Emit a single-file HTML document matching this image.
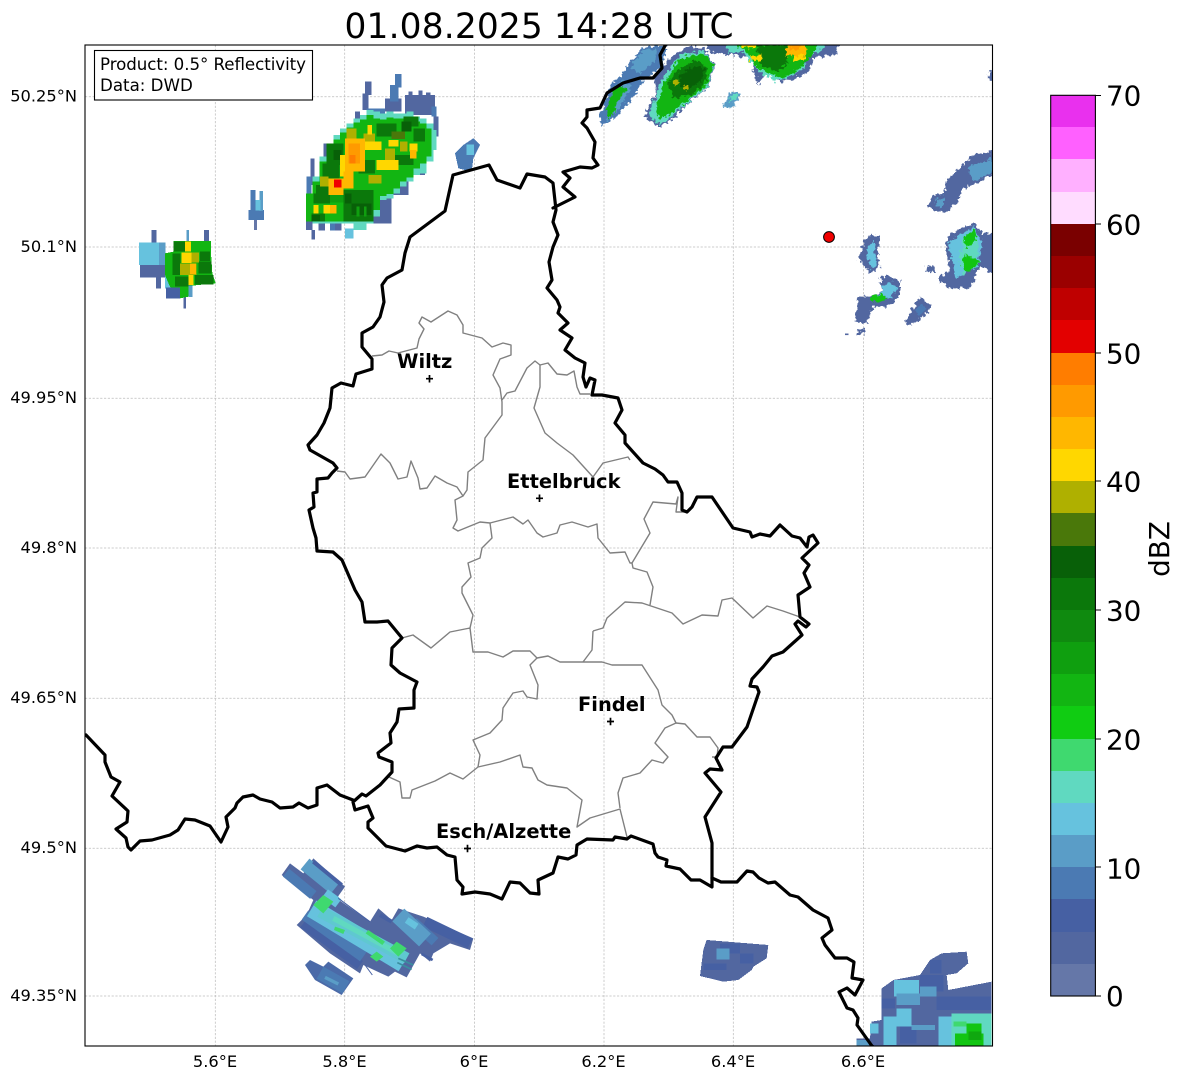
<!DOCTYPE html>
<html><head><meta charset="utf-8"><style>
html,body{margin:0;padding:0;background:#fff;width:1184px;height:1081px;overflow:hidden}
svg{display:block}
text{font-family:"DejaVu Sans",sans-serif;fill:#000}
.t{font-size:16.67px}
.l{font-size:16.25px}
.c{font-size:27.78px}
.b{font-size:19.44px;font-weight:bold}
</style></head><body>
<svg width="1184" height="1081" viewBox="0 0 1184 1081" xmlns="http://www.w3.org/2000/svg">
<defs>
<clipPath id="ax"><rect x="85" y="45" width="907.5" height="1001"/></clipPath>
<filter id="rough" x="-5%" y="-5%" width="110%" height="110%" filterUnits="objectBoundingBox" primitiveUnits="userSpaceOnUse" color-interpolation-filters="sRGB">
<feTurbulence type="fractalNoise" baseFrequency=".09" numOctaves="2" seed="4"/>
<feDisplacementMap in="SourceGraphic" scale="24" xChannelSelector="R" yChannelSelector="G"/>
</filter>
</defs>
<text x="539" y="38" font-size="34.4" text-anchor="middle" textLength="389">01.08.2025 14:28 UTC</text>

<g stroke="#bcbcbc" stroke-width=".75" stroke-dasharray="2.2 1.6" fill="none">
<path d="M215.3 45V1046M344.7 45V1046M474.5 45V1046M604 45V1046M733.3 45V1046M863.5 45V1046"/>
<path d="M85 96.7H992M85 247H992M85 398.3H992M85 548H992M85 698.3H992M85 848.3H992M85 996H992"/>
</g>

<g clip-path="url(#ax)">
<!-- main NW cell -->
<g transform="translate(290,60) scale(.33333)" shape-rendering="crispEdges">
<g fill="#5267a0">
<rect x="48" y="425" width="20" height="85"/><rect x="62" y="295" width="12" height="80"/><rect x="65" y="510" width="10" height="28"/><rect x="85" y="490" width="20" height="22"/><rect x="100" y="250" width="15" height="40"/><rect x="130" y="225" width="15" height="30"/>
<rect x="195" y="155" width="15" height="30"/><rect x="225" y="65" width="20" height="40"/><rect x="218" y="100" width="18" height="50"/>
<rect x="285" y="115" width="50" height="40"/><rect x="345" y="105" width="90" height="60"/><rect x="355" y="95" width="12" height="15"/><rect x="385" y="92" width="12" height="15"/><rect x="408" y="98" width="14" height="15"/><rect x="430" y="170" width="15" height="60"/>
<rect x="120" y="490" width="35" height="22"/><rect x="265" y="410" width="40" height="80"/><rect x="250" y="470" width="20" height="20"/><rect x="300" y="365" width="55" height="40"/><rect x="345" y="340" width="25" height="25"/><rect x="385" y="320" width="20" height="25"/>
</g>
<g fill="#4b7ab3"><rect x="300" y="75" width="25" height="50"/><rect x="315" y="42" width="20" height="40"/><rect x="230" y="145" width="55" height="20"/><rect x="425" y="140" width="15" height="30"/><rect x="50" y="350" width="15" height="75"/><rect x="120" y="490" width="15" height="22"/></g>
<g fill="#60d9c0">
<rect x="68" y="350" width="20" height="140"/><rect x="88" y="290" width="22" height="200"/><rect x="110" y="250" width="20" height="240"/><rect x="130" y="225" width="20" height="265"/><rect x="150" y="205" width="20" height="285"/><rect x="170" y="190" width="20" height="300"/><rect x="190" y="175" width="20" height="335"/><rect x="210" y="165" width="20" height="345"/><rect x="230" y="150" width="20" height="340"/><rect x="250" y="155" width="20" height="315"/><rect x="270" y="160" width="20" height="260"/><rect x="290" y="155" width="20" height="260"/><rect x="310" y="160" width="20" height="240"/><rect x="330" y="160" width="20" height="220"/><rect x="350" y="155" width="20" height="210"/><rect x="370" y="170" width="20" height="175"/><rect x="390" y="175" width="20" height="165"/><rect x="410" y="190" width="20" height="115"/><rect x="425" y="210" width="15" height="60"/>
</g>
<rect x="165" y="505" width="25" height="30" fill="#66c2de"/>
<g fill="#12b512">
<rect x="48" y="400" width="20" height="85"/><rect x="68" y="365" width="20" height="120"/><rect x="88" y="305" width="22" height="180"/><rect x="110" y="262" width="20" height="223"/><rect x="130" y="238" width="20" height="247"/><rect x="150" y="218" width="20" height="267"/><rect x="170" y="203" width="20" height="282"/><rect x="190" y="188" width="20" height="297"/><rect x="210" y="178" width="20" height="307"/><rect x="230" y="165" width="20" height="300"/><rect x="250" y="175" width="20" height="275"/><rect x="270" y="178" width="20" height="230"/><rect x="290" y="172" width="20" height="230"/><rect x="310" y="175" width="20" height="210"/><rect x="330" y="175" width="20" height="190"/><rect x="350" y="172" width="20" height="180"/><rect x="370" y="185" width="20" height="140"/><rect x="390" y="190" width="20" height="120"/><rect x="410" y="205" width="15" height="85"/>
</g>
<g fill="#0b780b"><rect x="160" y="390" width="90" height="95"/><rect x="65" y="460" width="40" height="25"/><rect x="78" y="375" width="40" height="30"/><rect x="110" y="250" width="50" height="65"/><rect x="98" y="310" width="50" height="45"/><rect x="260" y="190" width="60" height="40"/><rect x="340" y="170" width="45" height="30"/><rect x="205" y="300" width="50" height="40"/><rect x="310" y="285" width="60" height="30"/><rect x="370" y="205" width="35" height="40"/><rect x="70" y="400" width="50" height="30"/></g>
<g fill="#086008"><rect x="185" y="430" width="60" height="35"/><rect x="65" y="465" width="25" height="18"/><rect x="130" y="270" width="25" height="30"/><rect x="335" y="185" width="30" height="30"/><rect x="165" y="400" width="20" height="30"/></g>
<g fill="#0f9f0f"><rect x="200" y="440" width="8" height="30"/><rect x="222" y="440" width="8" height="30"/><rect x="120" y="400" width="40" height="28"/></g>
<g fill="#afb000"><rect x="170" y="205" width="30" height="30"/><rect x="220" y="220" width="35" height="25"/><rect x="235" y="345" width="40" height="25"/><rect x="285" y="265" width="30" height="40"/><rect x="90" y="350" width="25" height="30"/><rect x="330" y="245" width="22" height="30"/></g>
<rect fill="#4a780a" x="305" y="215" width="40" height="22"/>
<g fill="#ffd700"><rect x="150" y="285" width="20" height="65"/><rect x="225" y="245" width="50" height="25"/><rect x="260" y="300" width="65" height="30"/><rect x="295" y="240" width="30" height="20"/><rect x="70" y="435" width="15" height="25"/><rect x="100" y="435" width="20" height="25"/><rect x="358" y="250" width="25" height="25"/><rect x="232" y="195" width="14" height="28"/></g>
<g fill="#ffb700"><rect x="165" y="235" width="60" height="100"/><rect x="115" y="355" width="45" height="50"/><rect x="160" y="335" width="30" height="50"/><rect x="360" y="270" width="20" height="25"/><rect x="120" y="435" width="20" height="25"/></g>
<rect fill="#ff9a00" x="175" y="250" width="35" height="60"/>
<rect fill="#ff7d00" x="178" y="285" width="18" height="25"/>
<rect fill="#f00000" x="132" y="359" width="22" height="24"/>
</g>

<!-- west cells -->
<g transform="translate(85,45) scale(.33333)" shape-rendering="crispEdges">
<g fill="#5267a0"><rect x="165" y="660" width="75" height="38"/><rect x="200" y="555" width="15" height="40"/><rect x="213" y="695" width="15" height="35"/><rect x="357" y="555" width="15" height="35"/><rect x="295" y="755" width="8" height="35"/></g>
<rect fill="#5a9dc7" x="305" y="555" width="7" height="35"/>
<rect fill="#66c2de" x="162" y="592" width="65" height="68"/>
<rect fill="#5a9dc7" x="222" y="592" width="20" height="68"/>
<rect fill="#66c2de" x="240" y="690" width="20" height="40"/>
<path fill="#12b512" d="M240 625L265 620 265 588 378 588 378 625 382 685 392 715 320 722 310 755 285 760 255 725 240 690z"/>
<rect fill="#4660a3" x="243" y="728" width="42" height="33"/>
<rect fill="#5a9dc7" x="310" y="722" width="12" height="34"/>
<g fill="#0b780b"><rect x="265" y="590" width="35" height="30"/><rect x="262" y="625" width="25" height="65"/><rect x="340" y="650" width="40" height="35"/><rect x="330" y="690" width="55" height="28"/><rect x="270" y="695" width="40" height="30"/><rect x="345" y="620" width="30" height="28"/></g>
<g fill="#afb000"><rect x="285" y="655" width="50" height="35"/><rect x="320" y="622" width="22" height="30"/></g>
<g fill="#ffd700"><rect x="300" y="590" width="18" height="30"/><rect x="290" y="622" width="30" height="32"/><rect x="310" y="690" width="15" height="30"/></g>
<rect fill="#ffb700" x="315" y="655" width="18" height="32"/>
<g fill="#4b7ab3"><rect x="497" y="435" width="15" height="60"/><rect x="490" y="495" width="47" height="30"/></g>
<rect fill="#5a9dc7" x="524" y="438" width="10" height="60"/>
<rect fill="#66c2de" x="512" y="465" width="15" height="32"/>
<rect fill="#6577a8" x="507" y="525" width="9" height="30"/>
<path fill="#4b7ab3" d="M1110 325L1135 300 1165 280 1185 300 1165 340 1160 380 1120 370z"/>
<rect fill="#66c2de" x="1145" y="298" width="22" height="32"/>
</g>

<!-- NE cells -->
<g transform="translate(580,45) scale(.33333)" filter="url(#rough)">
<path fill="#4b7ab3" d="M65 245L62 205 90 120 130 85 150 50 190 5 260 0 250 60 190 110 150 170 110 215z"/>
<path fill="#5a9dc7" d="M80 230L85 180 100 125 130 105 155 125 130 170 100 210zM150 65L190 15 230 15 225 50 180 85z"/>
<path fill="#12b512" d="M85 222L80 190 100 135 125 120 140 130 110 175 100 210z"/>
<path fill="#5267a0" d="M190 215L230 140 220 95 270 40 320 5 370 10 405 60 385 125 340 160 285 215 240 248z"/>
<path fill="#60d9c0" d="M205 210L235 135 245 100 300 30 370 18 402 60 382 125 337 160 278 212 240 240z"/>
<path fill="#12b512" d="M225 200L250 115 300 40 370 25 400 60 380 120 330 160 275 205 240 222z"/>
<path fill="#0b780b" d="M262 115L300 70 345 45 385 70 375 115 335 150 280 160z"/>
<path fill="#086008" d="M300 90L345 60 375 75 365 105 330 130 300 125z"/>
<path fill="#afb000" d="M280 105h18v14h-18zM310 120h16v14h-16z"/>
<path fill="#5267a0" d="M380 -10H780L770 25 700 40 685 80 640 105 600 110 555 90 535 118 525 95 515 40 450 28 420 30 385 20z"/>
<path fill="#60d9c0" d="M440 -10H740L720 18 690 30 670 70 620 100 590 108 545 85 510 50 490 22 445 22z"/>
<path fill="#12b512" d="M455 -10H720L690 40 660 70 610 100 570 85 525 65 510 35 490 15z"/>
<path fill="#0b780b" d="M530 2H620V60L590 80 540 60z"/>
<path fill="#ffd700" d="M510 32h35v14h-35zM480 -10h45v18h-45zM640 30h35v18h-35z"/>
<path fill="#ffb700" d="M620 -10h60v42h-60z"/>
<path fill="#ff9a00" d="M630 -5h30v22h-30z"/>
<path fill="#5a9dc7" d="M430 185L445 145 475 140 478 165 450 190z"/>
<path fill="#60d9c0" d="M450 155l20-8v15l-20 8z"/>
<path fill="#5267a0" d="M1225 80L1245 70 1245 115 1225 100z"/>
<path fill="#5267a0" d="M1045 485L1060 450 1095 445 1100 405 1160 350 1180 330 1250 318 1250 380 1200 410 1150 430 1130 475 1095 505 1065 495z"/>
<path fill="#5a9dc7" d="M1165 365L1235 340 1245 375 1180 410 1170 390zM1065 465l30-8v25l-25 5z"/>
<path fill="#5267a0" d="M835 640L855 585 875 568 900 572 895 620 898 670 870 685z"/>
<path fill="#66c2de" d="M860 615L880 590 890 660 870 670z"/>
<path fill="#5267a0" d="M825 830L835 755 870 755 905 740 900 700 925 690 960 710 960 750 925 785 880 785 860 835z"/>
<path fill="#66c2de" d="M905 725l25-15 25 20-20 25-25 10-35 0 5-15 25-5z"/>
<path fill="#12c512" d="M875 748h40v22h-40z"/>
<path fill="#5267a0" d="M975 830L1020 755 1055 780 1035 815 990 840zM1040 665l20 0 5 15-25 0zM828 870l5-20 8 5 14-8 0 22-12-5-5 8z"/>
<path fill="#4b7ab3" d="M1005 800l20-25 15 10-20 25z"/>
<path fill="#5267a0" d="M1072 700L1110 675 1095 600 1110 565 1180 535 1210 565 1250 565 1250 690 1200 665 1170 730 1100 728z"/>
<path fill="#66c2de" d="M1105 590L1180 545 1205 590 1195 665 1130 700 1115 640z"/>
<path fill="#60d9c0" d="M1150 580L1185 560 1195 600 1190 660 1150 690 1140 640z"/>
<path fill="#12c512" d="M1150 575L1185 555 1188 590 1160 610zM1155 630L1190 640 1195 655 1165 685 1145 670z"/>
</g>
<rect x="845" y="333.5" width="3.5" height="1.6" fill="#5267a0"/>

<!-- south cells -->
<g transform="translate(270,850) scale(.33333)" fill="none" stroke-linecap="butt">
<path fill="#5267a0" d="M35 75L60 40 100 70 130 25 225 110 200 145 300 215 325 175 365 210 385 175 460 200 610 265 600 300 540 280 490 310 480 335 450 310 410 382 375 365 355 380 280 345 270 370 180 310 80 225 110 195 130 150z"/>
<g stroke="#4660a3"><path stroke-width="12" d="M330 195L365 215"/><path stroke-width="32" d="M465 215L600 280"/><path stroke-width="30" d="M100 220L270 345"/><path stroke-width="8" d="M455 312L488 330"/></g>
<g stroke="#4b7ab3"><path stroke-width="30" d="M48 68L130 135"/><path stroke-width="34" d="M105 195L280 320"/><path stroke-width="30" d="M430 215L495 275"/></g>
<g stroke="#5a9dc7"><path stroke-width="42" d="M105 42L195 115"/><path stroke-width="52" d="M385 195L465 270"/><path stroke-width="25" d="M170 130L200 152"/></g>
<path stroke="#4660a3" stroke-width="12" d="M130 35L215 105"/>
<g stroke="#66c2de"><path stroke-width="55" d="M125 175L400 340"/><path stroke-width="30" d="M165 130L205 160"/><path stroke-width="20" d="M410 210L440 230"/></g>
<path stroke="#5fc8d0" stroke-width="35" d="M150 185L410 325"/>
<path stroke="#60d9c0" stroke-width="16" d="M190 205L385 310"/>
<g fill="#3fd96f" stroke="none"><path d="M130 165L160 135 190 155 160 190zM360 295L380 275 410 295 385 320zM300 320L320 305 340 320 320 335zM195 230l30 10-5 12-28-12zM295 240l50 35-8 10-50-35z"/></g>
<g stroke="#3a8f9f" stroke-width="5"><path d="M385 325L430 345M382 338L425 358"/></g>
<path stroke="#4660a3" stroke-width="3" d="M285 345L307 375M205 145L300 215"/>
<path fill="#4b6aa8" d="M105 345L120 330 160 350 175 335 250 385 215 435 135 390z"/>
<path stroke="#4b7ab3" stroke-width="42" d="M150 368L228 412"/>
<path stroke="#5a9dc7" stroke-width="10" d="M165 382L205 402"/>
</g>
<g transform="translate(690,930) scale(.33333)" shape-rendering="crispEdges">
<path fill="#5267a0" d="M50 30L235 45 230 85 190 110 185 120 145 150 100 155 30 138 40 60z"/>
<path fill="#4660a3" d="M90 40h60v30h-60zM40 100h70v20h-70zM150 70h40v30h-40z"/>
<path fill="#5a9dc7" d="M80 55h38v33h-38z"/>
<path fill="#5267a0" d="M500 325H540L545 275 575 270 575 175 610 150 690 135 720 90 755 70 830 65 835 100 800 130 770 135 775 180 905 155 905 350H500z"/>
<path fill="#4660a3" d="M690 135h70v50h-70zM575 205h40v30h-40zM720 90h35v40h-35zM740 200h165v40h-165zM630 290h50v50h-50z"/>
<path fill="#66c2de" d="M612 150h75v50h-75zM620 235h45v55h-45zM580 260h40v85h-40zM540 280h25v30h-25zM745 260h160v90h-160z"/>
<path fill="#5a9dc7" d="M620 190h70v35h-70zM690 170h50v30h-50zM665 285h70v15h-70zM500 330h40v20h-40z"/>
<path fill="#60d9c0" d="M785 250h120v100h-120z"/>
<path fill="#3fd96f" d="M790 275h40v15h-40z"/>
<path fill="#12c512" d="M795 310h85v40h-85zM830 280h45v35h-45z"/>
<path fill="#0fa80f" d="M835 305h40v25h-40z"/>
</g>

<!-- canton lines -->
<g fill="none" stroke="#808080" stroke-width="1.4" stroke-linejoin="round">
<path d="M372 356L382 355 389 351 398 353 417 348 419 339 424 329 419 323 422 317 431 322 448 311 457 315 463 325 463 333 482 338 492 347 503 343 511 345 511 355 500 359 493 375 500 388 502 402 502 415 485 438 483 460 468 472 467 490 463 496"/>
<path d="M502 400L507 393 515 391 527 368 535 361 540 365 548 363 557 374 567 375 574 371 577 387 580 394 590 394"/>
<path d="M540 365L540 387 534 408 545 433 557 443 573 455 593 477 603 463 628 457 630 460"/>
<path d="M337 471L345 472 350 479 365 477 381 454 390 463 398 479 407 477 411 461 418 478 420 489 427 488 435 476 447 483 457 487 463 496 455 500 457 520 453 528 458 531 480 522 490 523 513 517 523 524 528 520 537 533 543 537 557 533 560 525 572 522 588 527 597 524 598 538 610 553 625 552 630 563 632 563 650 533 644 519 653 502 676 504 678 497 676 512 685 512"/>
<path d="M632 563L633 568 647 572 653 587 650 605"/>
<path d="M593 631L603 628 607 618 625 602 642 603 660 609 672 613 683 624 702 615 718 616 722 600 732 598 753 618 767 606 783 611 800 617"/>
<path d="M490 523L492 538 482 548 480 558 468 563 471 577 462 587 462 593 473 615 470 628"/>
<path d="M402 638L413 635 431 648 450 632 470 628 473 652 488 652 503 657 513 651 530 651 537 658 548 656 560 662 583 662 602 662 612 665 642 665 658 690 662 705 672 715 676 723"/>
<path d="M583 662L592 650 593 631"/>
<path d="M537 658L530 665 538 685 537 699 527 697 523 691 513 693 503 708 502 720 490 733 473 740 480 755 478 767"/>
<path d="M389 777L400 782 402 798 410 798 412 790 435 781 450 773 463 779 478 767 500 762 520 755 523 767 532 768 538 780 547 785 567 788 582 800 577 827 590 818 620 809 627 837"/>
<path d="M620 808L618 793 623 778 640 773 652 760 663 763 668 757 655 743 665 728 676 723 685 724 697 737 710 737 718 748 717 757 712 757"/>
</g>

<!-- borders -->
<g fill="none" stroke="#000" stroke-width="3.2" stroke-linejoin="round" stroke-linecap="round">
<path d="M489 165L453 175 445 211 410 237 405 253 402 270 387 278 382 285 384 302 380 317 373 327 362 333 362 347 372 359 372 369 356 374 353 386 341 383 332 388 330 408 324 423 317 435 308 445 310 450 333 463 337 468 332 473 328 478 317 479 317 492 313 493 314 507 309 510 313 528 316 538 317 551 333 552 342 560 355 590 362 602 365 622 377 622 388 621 402 638 392 648 391 665 400 673 417 682 414 690 414 708 399 709 397 722 390 733 391 743 378 753 379 757 392 762 392 772 380 785 366 796 362 794 353 802 355 810 368 806 373 818 368 822 368 828 386 846 405 851 417 846 427 848 437 847 447 855 455 857 457 880 463 887 462 894 475 892 490 894 502 899 510 882 520 883 530 893 539 894 538 880 553 873 558 857 568 859 576 855 577 845 587 839 613 840 615 837 627 839 631 836 653 844 655 853 658 857 667 860 666 866 680 869 691 880 700 880 712 887 712 878 712 843 705 817 721 792 705 773 710 769 722 770 716 758 723 747 732 747 747 727 759 692 757 687 750 686 752 679 763 667 772 656 783 652 802 635 795 624 798 621 806 627 809 624 800 617 798 595 810 587 804 573 809 565 802 558 818 543 813 535 809 537 807 547 800 538 792 536 780 525 770 536 760 534 752 537 750 532 733 528 712 497 697 497 692 507 687 512 682 510 682 493 677 482 668 482 663 475 655 469 643 463 625 443 625 435 615 423 622 410 618 398 602 395 592 395 595 380 590 378 586 387 583 377 585 363 575 358 565 350 572 338 560 330 568 323 558 313 560 307 557 300 547 288 552 280 549 262 553 247 558 235 553 222 556 210 553 183 545 177 527 174 520 188 497 180z"/>
<path d="M86 735L105 755 105 762 111 777 120 782 112 796 128 811 127 822 116 829 126 838 128 847 131 850 140 841 152 840 170 835 178 830 185 819 195 820 210 826 221 842 228 827 226 817 235 808 237 803 243 797 253 795 260 799 272 802 280 808 293 807 299 803 308 808 317 805 317 788 327 785 340 795 353 800"/>
<path d="M712 878L721 882 737 882 747 871 753 872 759 878 768 883 775 882 790 895 798 897 813 910 828 918 832 930 822 938 825 945 835 958 847 958 854 962 852 978 863 980 855 995 847 988 839 992 847 1008 853 1010 858 1018 857 1025 872 1046 878 1050"/>
<path d="M553 208L575 197 563 187 570 178 563 172 580 167 592 168 598 165 593 158 595 142 587 128 582 123 587 117 587 110 600 108 607 93 623 83 640 78 653 78 662 68 660 55 666 44"/>
</g>
</g>

<!-- cities -->
<g stroke="#000" stroke-width="1.7" fill="none">
<path d="M426 378.7h7M429.5 375v7.5M536 498.3h7M539.5 494.5v7.5M607 721.5h7M610.5 717.7v7.5M464 848.5h7M467.5 844.7v7.5"/>
</g>
<text class="b" x="397" y="368">Wiltz</text>
<text class="b" x="507" y="488">Ettelbruck</text>
<text class="b" x="578" y="711">Findel</text>
<text class="b" x="436" y="838">Esch/Alzette</text>

<circle cx="829" cy="237" r="5.4" fill="#f00000" stroke="#000" stroke-width="1"/>

<rect x="94.5" y="50.5" width="218" height="49.5" fill="#fff" stroke="#000" stroke-width="1.1"/>
<text class="t" x="100" y="70" textLength="206">Product: 0.5° Reflectivity</text>
<text class="t" x="100" y="91">Data: DWD</text>

<rect x="85" y="45" width="907.5" height="1001" fill="none" stroke="#000" stroke-width="1.1"/>

<g text-anchor="end">
<text class="l" x="77" y="101.5">50.25°N</text>
<text class="l" x="77" y="252">50.1°N</text>
<text class="l" x="77" y="403">49.95°N</text>
<text class="l" x="77" y="553">49.8°N</text>
<text class="l" x="77" y="703">49.65°N</text>
<text class="l" x="77" y="853">49.5°N</text>
<text class="l" x="77" y="1001">49.35°N</text>
</g>
<g text-anchor="middle">
<text class="l" x="215" y="1067">5.6°E</text>
<text class="l" x="344.5" y="1067">5.8°E</text>
<text class="l" x="474" y="1067">6°E</text>
<text class="l" x="603.5" y="1067">6.2°E</text>
<text class="l" x="733" y="1067">6.4°E</text>
<text class="l" x="863" y="1067">6.6°E</text>
</g>

<!-- colorbar -->
<g shape-rendering="crispEdges">
<rect x="1051" y="95.5" width="44.5" height="32" fill="#e930ee"/>
<rect x="1051" y="127" width="44.5" height="32" fill="#ff60ff"/>
<rect x="1051" y="159" width="44.5" height="33" fill="#ffb0ff"/>
<rect x="1051" y="192" width="44.5" height="32" fill="#ffdcff"/>
<rect x="1051" y="224" width="44.5" height="32" fill="#7a0000"/>
<rect x="1051" y="256" width="44.5" height="32" fill="#9b0000"/>
<rect x="1051" y="288" width="44.5" height="32" fill="#bf0000"/>
<rect x="1051" y="320" width="44.5" height="33" fill="#e30000"/>
<rect x="1051" y="353" width="44.5" height="32" fill="#ff7d00"/>
<rect x="1051" y="385" width="44.5" height="32" fill="#ff9a00"/>
<rect x="1051" y="417" width="44.5" height="32" fill="#ffb700"/>
<rect x="1051" y="449" width="44.5" height="32" fill="#ffd700"/>
<rect x="1051" y="481" width="44.5" height="32" fill="#afb000"/>
<rect x="1051" y="513" width="44.5" height="33" fill="#4a780a"/>
<rect x="1051" y="546" width="44.5" height="32" fill="#086008"/>
<rect x="1051" y="578" width="44.5" height="32" fill="#0b780b"/>
<rect x="1051" y="610" width="44.5" height="32" fill="#0f8a0f"/>
<rect x="1051" y="642" width="44.5" height="32" fill="#0f9f0f"/>
<rect x="1051" y="674" width="44.5" height="32" fill="#12b512"/>
<rect x="1051" y="706" width="44.5" height="33" fill="#10cc12"/>
<rect x="1051" y="739" width="44.5" height="32" fill="#3fd96f"/>
<rect x="1051" y="771" width="44.5" height="32" fill="#60d9c0"/>
<rect x="1051" y="803" width="44.5" height="32" fill="#66c2de"/>
<rect x="1051" y="835" width="44.5" height="32" fill="#5a9dc7"/>
<rect x="1051" y="867" width="44.5" height="32" fill="#4b7ab3"/>
<rect x="1051" y="899" width="44.5" height="33" fill="#4660a3"/>
<rect x="1051" y="932" width="44.5" height="32" fill="#5267a0"/>
<rect x="1051" y="964" width="44.5" height="32" fill="#6577a8"/>
</g>
<rect x="1050.7" y="95.3" width="44.7" height="900.7" fill="none" stroke="#000" stroke-width="1.1"/>
<path d="M1095.5 95.5h5.5M1095.5 224h5.5M1095.5 353h5.5M1095.5 481h5.5M1095.5 610h5.5M1095.5 739h5.5M1095.5 867h5.5M1095.5 996h5.5" stroke="#000" stroke-width="1.1" fill="none"/>
<text class="c" x="1106" y="105.5">70</text>
<text class="c" x="1106" y="234.5">60</text>
<text class="c" x="1106" y="363.5">50</text>
<text class="c" x="1106" y="491.5">40</text>
<text class="c" x="1106" y="620.5">30</text>
<text class="c" x="1106" y="749.5">20</text>
<text class="c" x="1106" y="878.5">10</text>
<text class="c" x="1106" y="1006">0</text>
<text class="c" transform="translate(1169,549) rotate(-90)" text-anchor="middle">dBZ</text>
</svg>
</body></html>
